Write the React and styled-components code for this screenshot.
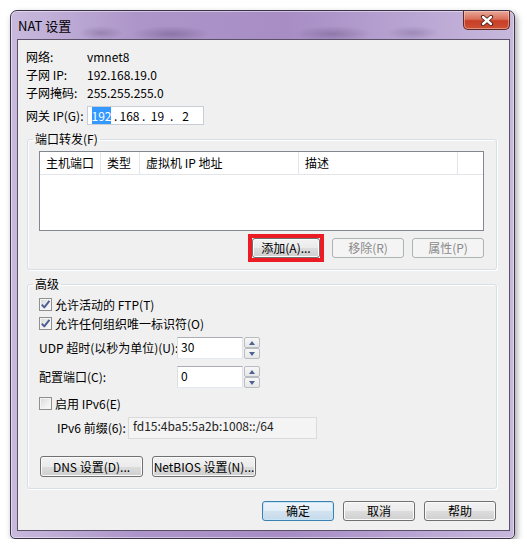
import styled, { createGlobalStyle } from "styled-components";

const GlobalStyle = createGlobalStyle`
  html, body {
    margin: 0;
    padding: 0;
    background: #ffffff;
  }
  body {
    font-family: "Noto Sans CJK SC", "Liberation Sans", sans-serif;
    font-size: 12px;
    color: #000;
  }
`;

const columns = ["主机端口", "类型", "虚拟机 IP 地址", "描述", ""];

const App = () => {
  return (
    <>
      <GlobalStyle />
      <Window>
        <TitleBar>
          <Title>NAT 设置</Title>
          <CloseButton>
            <svg width="14" height="11" viewBox="0 0 14 11">
              <path d="M3 2 L11 9 M11 2 L3 9" stroke="#4a1c14" strokeWidth="4.2" strokeLinecap="round" />
              <path d="M3 2 L11 9 M11 2 L3 9" stroke="#ffffff" strokeWidth="2.4" strokeLinecap="round" />
            </svg>
          </CloseButton>
        </TitleBar>
        <Frame>
          <Panel>
            <InfoRow>
              <InfoLabel>网络:</InfoLabel>
              <span>vmnet8</span>
            </InfoRow>
            <InfoRow>
              <InfoLabel>子网 IP:</InfoLabel>
              <span>192.168.19.0</span>
            </InfoRow>
            <InfoRow>
              <InfoLabel>子网掩码:</InfoLabel>
              <span>255.255.255.0</span>
            </InfoRow>
            <InfoRow $gateway>
              <InfoLabel>网关 IP(G):</InfoLabel>
              <IpBox>
                <IpField>
                  <Selected>192</Selected>
                </IpField>
                <IpDot>.</IpDot>
                <IpField>168</IpField>
                <IpDot>.</IpDot>
                <IpField>19</IpField>
                <IpDot>.</IpDot>
                <IpField>2</IpField>
              </IpBox>
            </InfoRow>

            <GroupBox $pt={5} $pb={7}>
              <Legend>端口转发(F)</Legend>
              <ListBox>
                <ListHeader>
                  {columns.map((c, i) => (
                    <HeaderCell key={i} $last={i === columns.length - 1}>
                      {c}
                    </HeaderCell>
                  ))}
                </ListHeader>
              </ListBox>
              <ButtonRow>
                <RedMark>
                  <Button $w={68}>添加(A)...</Button>
                </RedMark>
                <Button $w={72} disabled>
                  移除(R)
                </Button>
                <Button $w={72} disabled>
                  属性(P)
                </Button>
              </ButtonRow>
            </GroupBox>

            <GroupBox $pt={4} $pb={11}>
              <Legend>高级</Legend>
              <CheckRow>
                <CheckBox checked />
                <span>允许活动的 FTP(T)</span>
              </CheckRow>
              <CheckRow>
                <CheckBox checked />
                <span>允许任何组织唯一标识符(O)</span>
              </CheckRow>
              <FieldRow $mt={4}>
                <FieldLabel $w={138}>UDP 超时(以秒为单位)(U):</FieldLabel>
                <SpinField value="30" />
              </FieldRow>
              <FieldRow $mt={7}>
                <FieldLabel $w={138}>配置端口(C):</FieldLabel>
                <SpinField value="0" />
              </FieldRow>
              <CheckRow $mt={6}>
                <CheckBox />
                <span>启用 IPv6(E)</span>
              </CheckRow>
              <FieldRow $mt={4} $indent={18}>
                <FieldLabel $w={71}>IPv6 前缀(6):</FieldLabel>
                <ReadOnlyBox>fd15:4ba5:5a2b:1008::/64</ReadOnlyBox>
              </FieldRow>
              <SubButtons>
                <Button $w={103} $h={21}>
                  DNS 设置(D)...
                </Button>
                <Button $w={104} $h={21}>
                  NetBIOS 设置(N)...
                </Button>
              </SubButtons>
            </GroupBox>

            <Footer>
              <Button $w={72} $primary>
                确定
              </Button>
              <Button $w={72}>取消</Button>
              <Button $w={72}>帮助</Button>
            </Footer>
          </Panel>
        </Frame>
      </Window>
    </>
  );
};

const CheckBox = ({ checked }) => (
  <Box>
    {checked && (
      <svg width="11" height="11" viewBox="0 0 11 11">
        <path
          d="M1.8 5.6 L4.3 8.4 L9.4 1.8"
          fill="none"
          stroke="#4b5d93"
          strokeWidth="1.9"
          strokeLinejoin="round"
        />
      </svg>
    )}
  </Box>
);

const SpinField = ({ value }) => (
  <SpinWrap>
    <TextBox>{value}</TextBox>
    <Spinner>
      <SpinButton>
        <Arrow $up />
      </SpinButton>
      <SpinButton>
        <Arrow />
      </SpinButton>
    </Spinner>
  </SpinWrap>
);

const Window = styled.div`
  box-sizing: border-box;
  margin: 10px 0 0 10px;
  width: 505px;
  height: 529px;
  display: flex;
  flex-direction: column;
  border: 1px solid #3b3448;
  border-radius: 7px 7px 5px 5px;
  background: linear-gradient(
    90deg,
    #c9badd 0%,
    #ad95c9 25%,
    #a78dc4 55%,
    #b9a5d3 80%,
    #c7b8dc 100%
  );
  box-shadow: 2px 3px 6px rgba(0, 0, 0, 0.35),
    inset 0 0 0 1px rgba(255, 255, 255, 0.45);
`;

const TitleBar = styled.div`
  height: 28px;
  display: flex;
  align-items: flex-start;
  padding: 0 4px 0 7px;
  border-radius: 6px 6px 0 0;
  background: radial-gradient(ellipse 22px 7px at 90px 22px, rgba(80, 60, 105, 0.28), transparent),
    radial-gradient(ellipse 38px 8px at 160px 23px, rgba(80, 60, 105, 0.35), transparent),
    radial-gradient(ellipse 38px 8px at 322px 23px, rgba(80, 60, 105, 0.32), transparent),
    radial-gradient(ellipse 26px 7px at 402px 22px, rgba(80, 60, 105, 0.25), transparent);
`;

const Title = styled.div`
  flex: 1;
  align-self: center;
  padding-top: 2px;
  font-size: 13px;
  line-height: 16px;
  color: #000;
`;

const CloseButton = styled.div`
  box-sizing: border-box;
  width: 47px;
  height: 19px;
  display: flex;
  align-items: center;
  justify-content: center;
  border: 1px solid #5e2a22;
  border-top: none;
  border-radius: 0 0 5px 5px;
  background: linear-gradient(
    #e9a899 0%,
    #d9705c 45%,
    #c73d24 55%,
    #cc5238 100%
  );
  box-shadow: inset 0 0 0 1px rgba(255, 220, 210, 0.45);
`;

const Frame = styled.div`
  flex: 1;
  display: flex;
  padding: 0 4px 7px 6px;
`;

const Panel = styled.div`
  flex: 1;
  display: flex;
  flex-direction: column;
  padding: 8px 13px 8px 8px;
  background: #f0f0f0;
  border: 1px solid #5a5068;
`;

const InfoRow = styled.div`
  display: flex;
  align-items: center;
  height: ${(p) => (p.$gateway ? 19 : 18)}px;
  margin-top: ${(p) => (p.$gateway ? 4 : 0)}px;
  line-height: 14px;
`;

const InfoLabel = styled.span`
  width: 61px;
  flex-shrink: 0;
`;

const IpBox = styled.div`
  box-sizing: border-box;
  width: 117px;
  height: 19px;
  display: flex;
  align-items: center;
  padding-left: 1px;
  background: #fff;
  border: 1px solid #c9ced6;
`;

const IpField = styled.span`
  width: 25px;
  text-align: center;
  line-height: 12px;
`;

const IpDot = styled.span`
  width: 3px;
  text-align: center;
  line-height: 12px;
`;

const Selected = styled.span`
  background: #3399ff;
  color: #fff;
`;

const GroupBox = styled.fieldset`
  margin: 7px -1px 0 1px;
  padding: ${(p) => p.$pt}px 12px ${(p) => p.$pb}px 11px;
  min-width: 0;
  border: 1px solid #d5dfe5;
  border-radius: 3px;
  box-shadow: inset 1px 1px 0 #ffffff, 1px 1px 0 #ffffff;
`;

const Legend = styled.legend`
  margin-left: -6px;
  padding: 0 2px;
  font-size: 12px;
  line-height: 14px;
`;

const ListBox = styled.div`
  box-sizing: border-box;
  height: 80px;
  background: #fff;
  border: 1px solid #828790;
`;

const ListHeader = styled.div`
  display: grid;
  grid-template-columns: 61px 39px 159px 159px 1fr;
  height: 23px;
  box-sizing: border-box;
  border-bottom: 1px solid #e3e5e8;
`;

const HeaderCell = styled.div`
  box-sizing: border-box;
  padding-left: 6px;
  line-height: 22px;
  border-right: ${(p) => (p.$last ? "none" : "1px solid #e3e5e8")};
  white-space: nowrap;
`;

const ButtonRow = styled.div`
  display: flex;
  justify-content: flex-end;
  align-items: center;
  gap: 8px;
  margin-top: 3px;
`;

const RedMark = styled.div`
  box-sizing: border-box;
  width: 76px;
  height: 28px;
  display: flex;
  align-items: center;
  justify-content: center;
  border: 4px solid #ec1c24;
`;

const Button = styled.button`
  box-sizing: border-box;
  width: ${(p) => p.$w}px;
  height: ${(p) => p.$h || 20}px;
  padding: 0;
  font-family: "Noto Sans CJK SC", "Liberation Sans", sans-serif;
  font-size: 12px;
  line-height: 14px;
  color: #000;
  border: 1px solid ${(p) => (p.$primary ? "#3c7fb1" : "#707070")};
  border-radius: 3px;
  background: ${(p) =>
    p.$primary
      ? "linear-gradient(#eef5fb 0%, #e2edf6 50%, #d2e2ef 50%, #c7dbeb 100%)"
      : "linear-gradient(#f2f2f2 0%, #ebebeb 50%, #dddddd 50%, #cfcfcf 100%)"};
  box-shadow: inset 0 0 0 1px
    ${(p) => (p.$primary ? "#c6e6f8" : "#fbfbfb")};

  &:disabled {
    color: #8a8a8a;
    border-color: #adb2b5;
    background: #f4f4f4;
    box-shadow: none;
  }
`;

const CheckRow = styled.div`
  display: flex;
  align-items: center;
  gap: 3px;
  height: 19px;
  margin-top: ${(p) => p.$mt || 0}px;
  line-height: 14px;
`;

const Box = styled.span`
  box-sizing: border-box;
  width: 13px;
  height: 13px;
  display: flex;
  align-items: center;
  justify-content: center;
  border: 1px solid #8e8f8f;
  background: linear-gradient(135deg, #d8d8d8 0%, #f0f0f0 60%, #fbfbfb 100%);
  box-shadow: inset 0 0 0 1px #f4f4f4;
`;

const FieldRow = styled.div`
  display: flex;
  align-items: center;
  height: 22px;
  margin-top: ${(p) => p.$mt}px;
  padding-left: ${(p) => p.$indent || 0}px;
  line-height: 14px;
`;

const FieldLabel = styled.span`
  width: ${(p) => p.$w}px;
  flex-shrink: 0;
  white-space: nowrap;
`;

const SpinWrap = styled.div`
  display: flex;
  gap: 1px;
  height: 22px;
`;

const TextBox = styled.div`
  box-sizing: border-box;
  width: 66px;
  height: 22px;
  padding: 2px 0 0 3px;
  line-height: 14px;
  background: #fff;
  border: 1px solid;
  border-color: #abadb3 #e2e3ea #e3e9ef #dbdfe6;
`;

const Spinner = styled.div`
  display: flex;
  flex-direction: column;
  width: 16px;
`;

const SpinButton = styled.div`
  box-sizing: border-box;
  height: 11px;
  display: flex;
  align-items: center;
  justify-content: center;
  border: 1px solid #b9bcc0;
  border-radius: 2px;
  background: linear-gradient(#f7f7f7, #e7e7e7);
`;

const Arrow = styled.span`
  width: 0;
  height: 0;
  border-left: 3.5px solid transparent;
  border-right: 3.5px solid transparent;
  ${(p) =>
    p.$up
      ? "border-bottom: 4px solid #4d6390;"
      : "border-top: 4px solid #4d6390;"}
`;

const ReadOnlyBox = styled.div`
  box-sizing: border-box;
  width: 189px;
  height: 22px;
  padding: 1px 0 0 4px;
  line-height: 14px;
  color: #222;
  background: #f4f4f4;
  border: 1px solid #d9dadc;
`;

const SubButtons = styled.div`
  display: flex;
  gap: 9px;
  margin: 17px 0 0 1px;
`;

const Footer = styled.div`
  display: flex;
  justify-content: flex-end;
  gap: 9px;
  margin-top: 12px;
`;

export default App;
